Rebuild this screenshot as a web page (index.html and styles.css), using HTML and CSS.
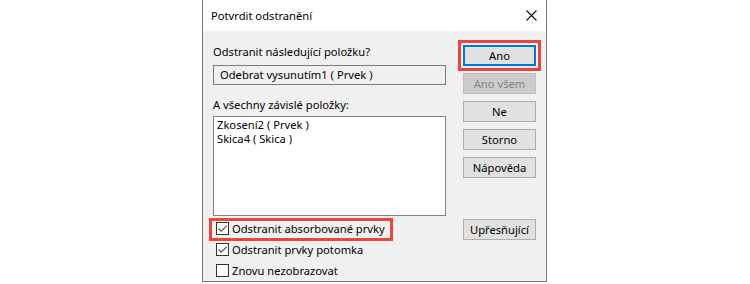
FILE: index.html
```html
<!DOCTYPE html>
<html lang="cs">
<head>
  <meta charset="UTF-8" />
  <title>Potvrdit odstranění</title>
  <link rel="stylesheet" href="styles.css">
</head>
<body>

  <div class="dialog">
    <!-- Title bar -->
    <div class="titlebar">
      <span class="title">Potvrdit odstranění</span>
      <svg class="close" width="11" height="11" viewBox="0 0 11 11">
        <path d="M0.5 0.5 L10.5 10.5 M10.5 0.5 L0.5 10.5" stroke="#111" stroke-width="1.1" fill="none"/>
      </svg>
    </div>

    <div class="content">
      <!-- Left side -->
      <div class="left">
        <div class="label">Odstranit následující položku?</div>
        <div class="field">Odebrat vysunutím1 ( Prvek )</div>
        <div class="label second">A všechny závislé položky:</div>
        <div class="list">
          <div>Zkosení2 ( Prvek )</div>
          <div>Skica4 ( Skica )</div>
        </div>
        <div class="checks">
          <label class="check marked">
            <span class="box"><svg width="11" height="11" viewBox="0 0 11 11"><path d="M1.5 5.5 L4.2 8.2 L9.8 2.6" stroke="#555" stroke-width="1.2" fill="none"/></svg></span>
            Odstranit absorbované prvky
          </label>
          <label class="check">
            <span class="box"><svg width="11" height="11" viewBox="0 0 11 11"><path d="M1.5 5.5 L4.2 8.2 L9.8 2.6" stroke="#555" stroke-width="1.2" fill="none"/></svg></span>
            Odstranit prvky potomka
          </label>
          <label class="check">
            <span class="box"></span>
            Znovu nezobrazovat
          </label>
        </div>
      </div>

      <!-- Right side buttons -->
      <div class="right">
        <button class="btn btn-default marked">Ano</button>
        <button class="btn" disabled>Ano všem</button>
        <button class="btn">Ne</button>
        <button class="btn">Storno</button>
        <button class="btn">Nápověda</button>
        <button class="btn btn-advanced">Upřesňující</button>
      </div>
    </div>
  </div>

</body>
</html>
```

FILE: styles.css
```css
* { margin: 0; padding: 0; box-sizing: border-box; }
body { font-family: "Noto Sans", Arial, sans-serif; font-size: 11.2px; color: #000; background-color: #fff; }

.dialog {
  margin-left: 202px;
  width: 345px;
  border: 1px solid #777;
  border-top: none;
}

.titlebar {
  display: flex;
  align-items: center;
  height: 31px;
  padding: 0 9px 0 8px;
  background-color: #fff;
}

.title { flex-grow: 1; }
.close { display: block; margin-top: -1px; }

.content {
  display: flex;
  gap: 17px;
  height: 250px;
  padding: 13px 9px 0 10px;
  background-color: #f0f0f0;
}

.left {
  display: flex;
  flex-direction: column;
  width: 233px;
}

.label { line-height: 15px; }
.label.second { margin-top: 12px; }

.field {
  margin-top: 6px;
  height: 20px;
  line-height: 18px;
  padding-left: 6px;
  border: 1px solid #7a7a7a;
  background-color: #f0f0f0;
}

.list {
  margin-top: 4px;
  height: 100px;
  padding: 1px 3px;
  border: 1px solid #828282;
  background-color: #fff;
  line-height: 14px;
}

.checks {
  display: flex;
  flex-direction: column;
  align-items: flex-start;
  gap: 4px;
  margin-top: 5px;
}

.check {
  display: inline-flex;
  align-items: flex-start;
  gap: 3px;
  height: 17px;
  line-height: 15px;
  margin-left: -1px;
  padding: 0 5px 0 4px;
}

.check.marked { outline: 3px solid #e8453c; }

.box {
  display: flex;
  align-items: center;
  justify-content: center;
  width: 13px;
  height: 13px;
  margin-top: 1px;
  border: 1px solid #333;
  background-color: #fff;
}

.right {
  display: flex;
  flex-direction: column;
  gap: 7px;
  width: 73px;
  padding-top: 1px;
}

.btn {
  height: 21px;
  font-family: inherit;
  font-size: 11.2px;
  color: #000;
  background-color: #e1e1e1;
  border: 1px solid #adadad;
}

.btn:disabled {
  color: #838383;
  background-color: #cccccc;
  border-color: #bfbfbf;
}

.btn-default { border: 2px solid #0078d7; }
.marked.btn { outline: 3px solid #e8453c; outline-offset: 2px; }

.btn-advanced { margin-top: 34px; }
```
